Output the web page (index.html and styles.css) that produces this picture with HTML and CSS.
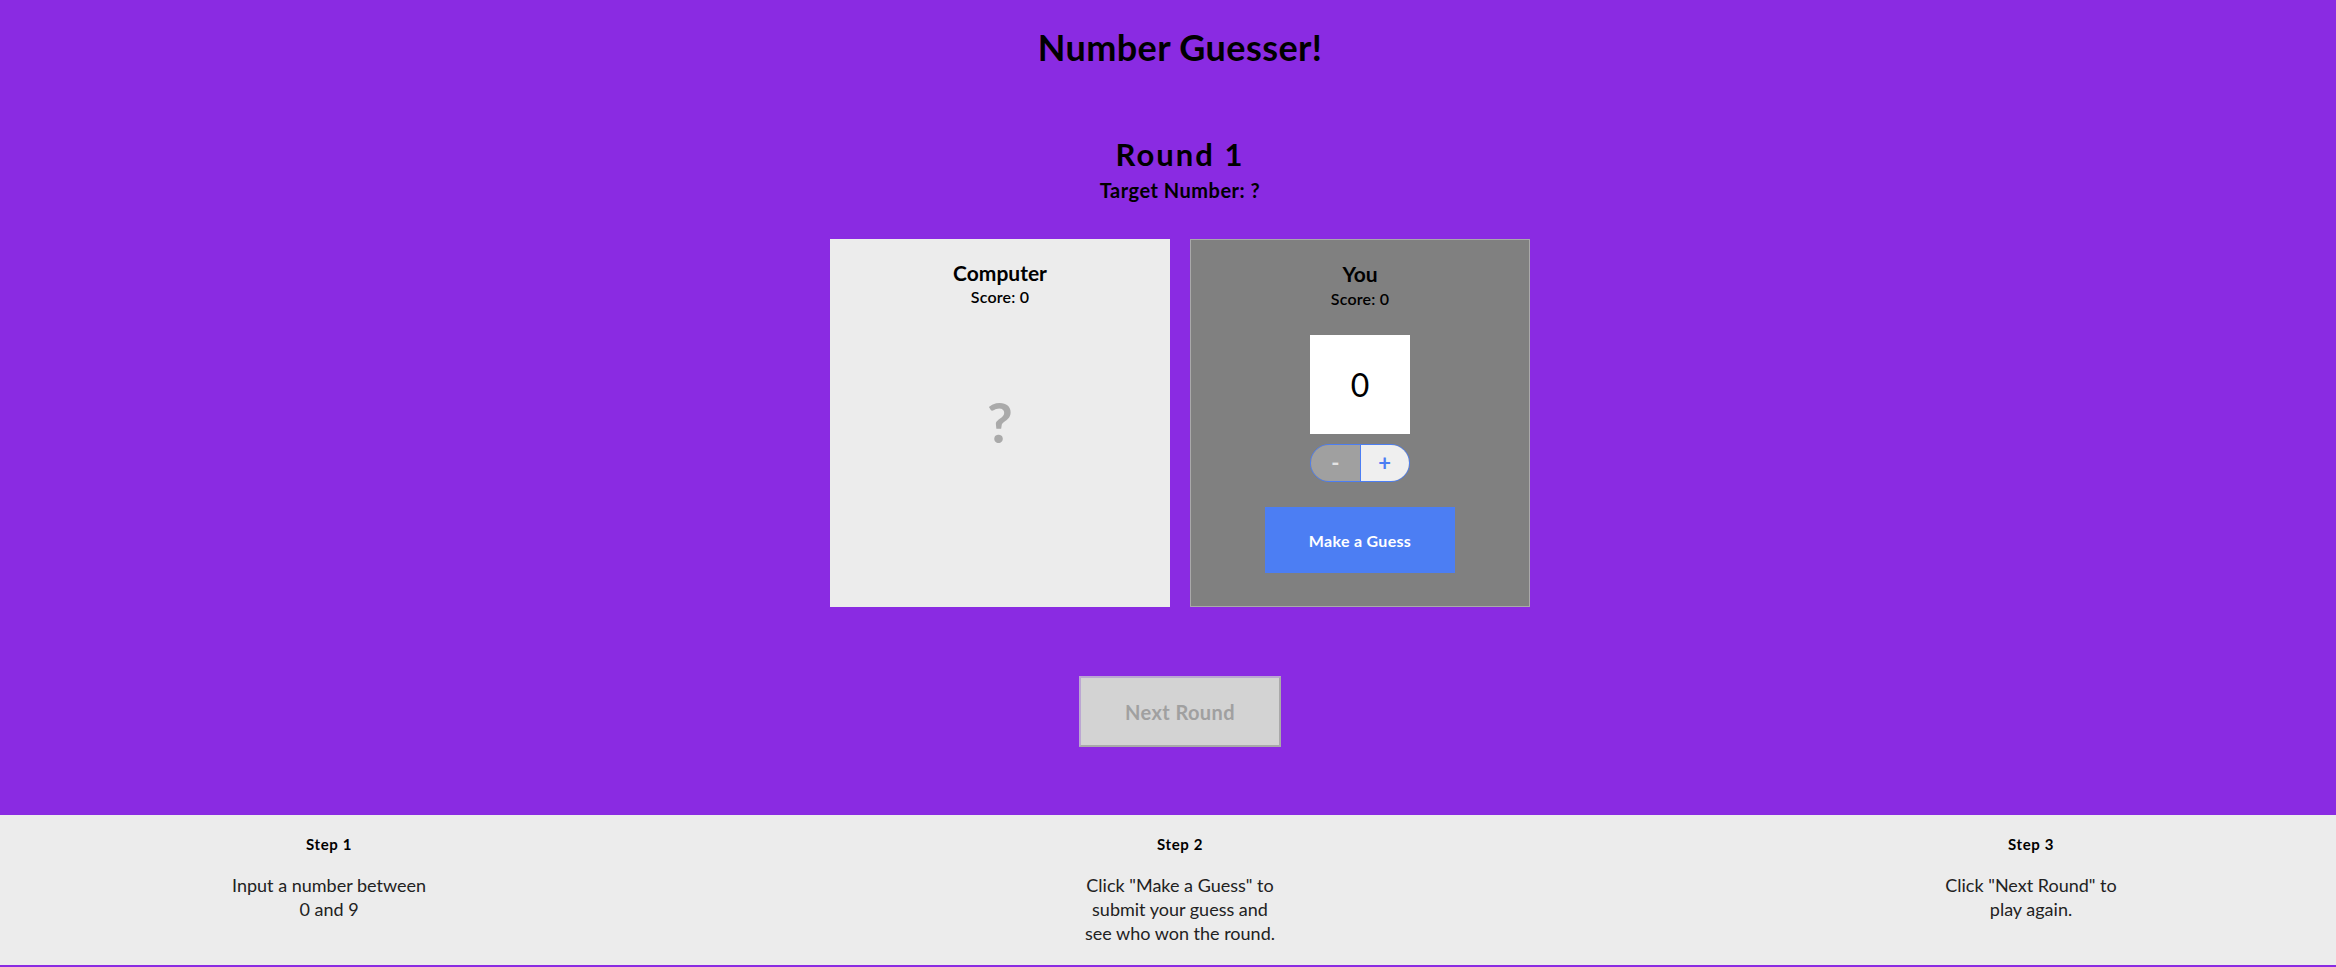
FILE: index.html
```html
<!DOCTYPE html>
<html lang="en">
<head>
<meta charset="utf-8">
<title>Number Guesser!</title>
<link rel="stylesheet" href="styles.css">
</head>
<body>
<header class="site-header">
  <h1 class="title">Number Guesser!</h1>
</header>
<main class="game">
  <section class="round-info">
    <h2 class="round-title">Round 1</h2>
    <h3 class="target">Target Number: ?</h3>
  </section>
  <section class="players">
    <div class="card card-computer">
      <h3 class="card-name">Computer</h3>
      <p class="card-score">Score: 0</p>
      <div class="computer-guess">?</div>
    </div>
    <div class="card card-human">
      <h3 class="card-name">You</h3>
      <p class="card-score card-score-human">Score: 0</p>
      <div class="number-input">0</div>
      <div class="stepper">
        <button class="step-btn step-minus">-</button>
        <button class="step-btn step-plus">+</button>
      </div>
      <button class="guess-btn">Make a Guess</button>
    </div>
  </section>
  <div class="next-wrap">
    <button class="next-btn">Next Round</button>
  </div>
</main>
<footer class="instructions">
  <div class="step">
    <h4 class="step-title">Step 1</h4>
    <p class="step-text">Input a number between<br>0 and 9</p>
  </div>
  <div class="step">
    <h4 class="step-title">Step 2</h4>
    <p class="step-text">Click "Make a Guess" to<br>submit your guess and<br>see who won the round.</p>
  </div>
  <div class="step">
    <h4 class="step-title">Step 3</h4>
    <p class="step-text">Click "Next Round" to<br>play again.</p>
  </div>
</footer>
</body>
</html>
```

FILE: styles.css
```css
* { box-sizing: border-box; }

html, body {
  margin: 0;
  padding: 0;
}

body {
  background: #8a2be2;
  font-family: "Lato", "Noto Sans", sans-serif;
  color: #000;
  padding-bottom: 2px;
}

.site-header {
  padding: 27px 0 0 24px;
  text-align: center;
}

.title {
  margin: 0;
  font-size: 36px;
  line-height: 40px;
  font-weight: 700;
  letter-spacing: 0.4px;
}

.game {
  padding-left: 24px;
  display: flex;
  flex-direction: column;
  align-items: center;
}

.round-info {
  margin-top: 69px;
  text-align: center;
}

.round-title {
  margin: 0;
  font-size: 31px;
  line-height: 36px;
  font-weight: 700;
  letter-spacing: 2px;
}

.target {
  margin: 6px 0 0;
  font-size: 20px;
  line-height: 24px;
  font-weight: 700;
  letter-spacing: 0.5px;
}

.players {
  margin-top: 37px;
  display: flex;
  gap: 20px;
}

.card {
  width: 340px;
  height: 368px;
  display: flex;
  flex-direction: column;
  align-items: center;
  padding-top: 21px;
}

.card-computer {
  background: #ececec;
}

.card-human {
  background: #808080;
  border: 1px solid #a9a9a9;
}

.card-name {
  margin: 0;
  font-size: 21px;
  line-height: 25px;
  font-weight: 700;
}

.card-score {
  margin: 2px 0 0;
  font-size: 16px;
  line-height: 20px;
  font-weight: 600;
  letter-spacing: 0.2px;
}

.card-score-human {
  margin-top: 3px;
}

.computer-guess {
  margin-top: 85px;
  font-size: 56px;
  line-height: 60px;
  font-weight: 700;
  color: #aaaaaa;
}

.number-input {
  margin-top: 26px;
  width: 100px;
  height: 99px;
  background: #fff;
  display: flex;
  align-items: center;
  justify-content: center;
  font-size: 32px;
  font-weight: 400;
}

.stepper {
  margin-top: 10px;
  width: 100px;
  height: 38px;
  display: flex;
  border: 1px solid #4c7ef3;
  border-radius: 19px;
  overflow: hidden;
}

.step-btn {
  flex: 1;
  border: 0;
  margin: 0;
  padding: 0;
  font-family: inherit;
  font-size: 22px;
  font-weight: 700;
  line-height: 1;
}

.step-minus {
  background: #a0a0a0;
  color: #e4e4e4;
  border-right: 1px solid #4c7ef3;
}

.step-plus {
  background: #efefef;
  color: #4c7ef3;
}

.guess-btn {
  margin-top: 25px;
  width: 190px;
  height: 66px;
  background: #4c7ef3;
  color: #fff;
  border: 0;
  font-family: inherit;
  font-size: 16px;
  font-weight: 700;
  letter-spacing: 0.3px;
}

.next-wrap {
  margin-top: 69px;
}

.next-btn {
  width: 202px;
  height: 71px;
  background: #d3d3d3;
  color: #a0a0a0;
  border: 2px solid #a9a9a9;
  border-top-color: #bba6d2;
  border-left-color: #bba6d2;
  font-family: inherit;
  font-size: 20px;
  font-weight: 700;
  letter-spacing: 0.4px;
}

.instructions {
  margin-top: 68px;
  height: 150px;
  background: #ececec;
  display: flex;
  justify-content: space-between;
  padding: 0 205px 0 229px;
}

.step {
  width: 200px;
  text-align: center;
}

.step-title {
  margin: 20px 0 0;
  font-size: 15px;
  line-height: 18px;
  font-weight: 700;
  letter-spacing: 0.6px;
}

.step-text {
  margin: 20px 0 0;
  font-size: 18px;
  line-height: 24px;
  color: #222;
  white-space: nowrap;
}
```
